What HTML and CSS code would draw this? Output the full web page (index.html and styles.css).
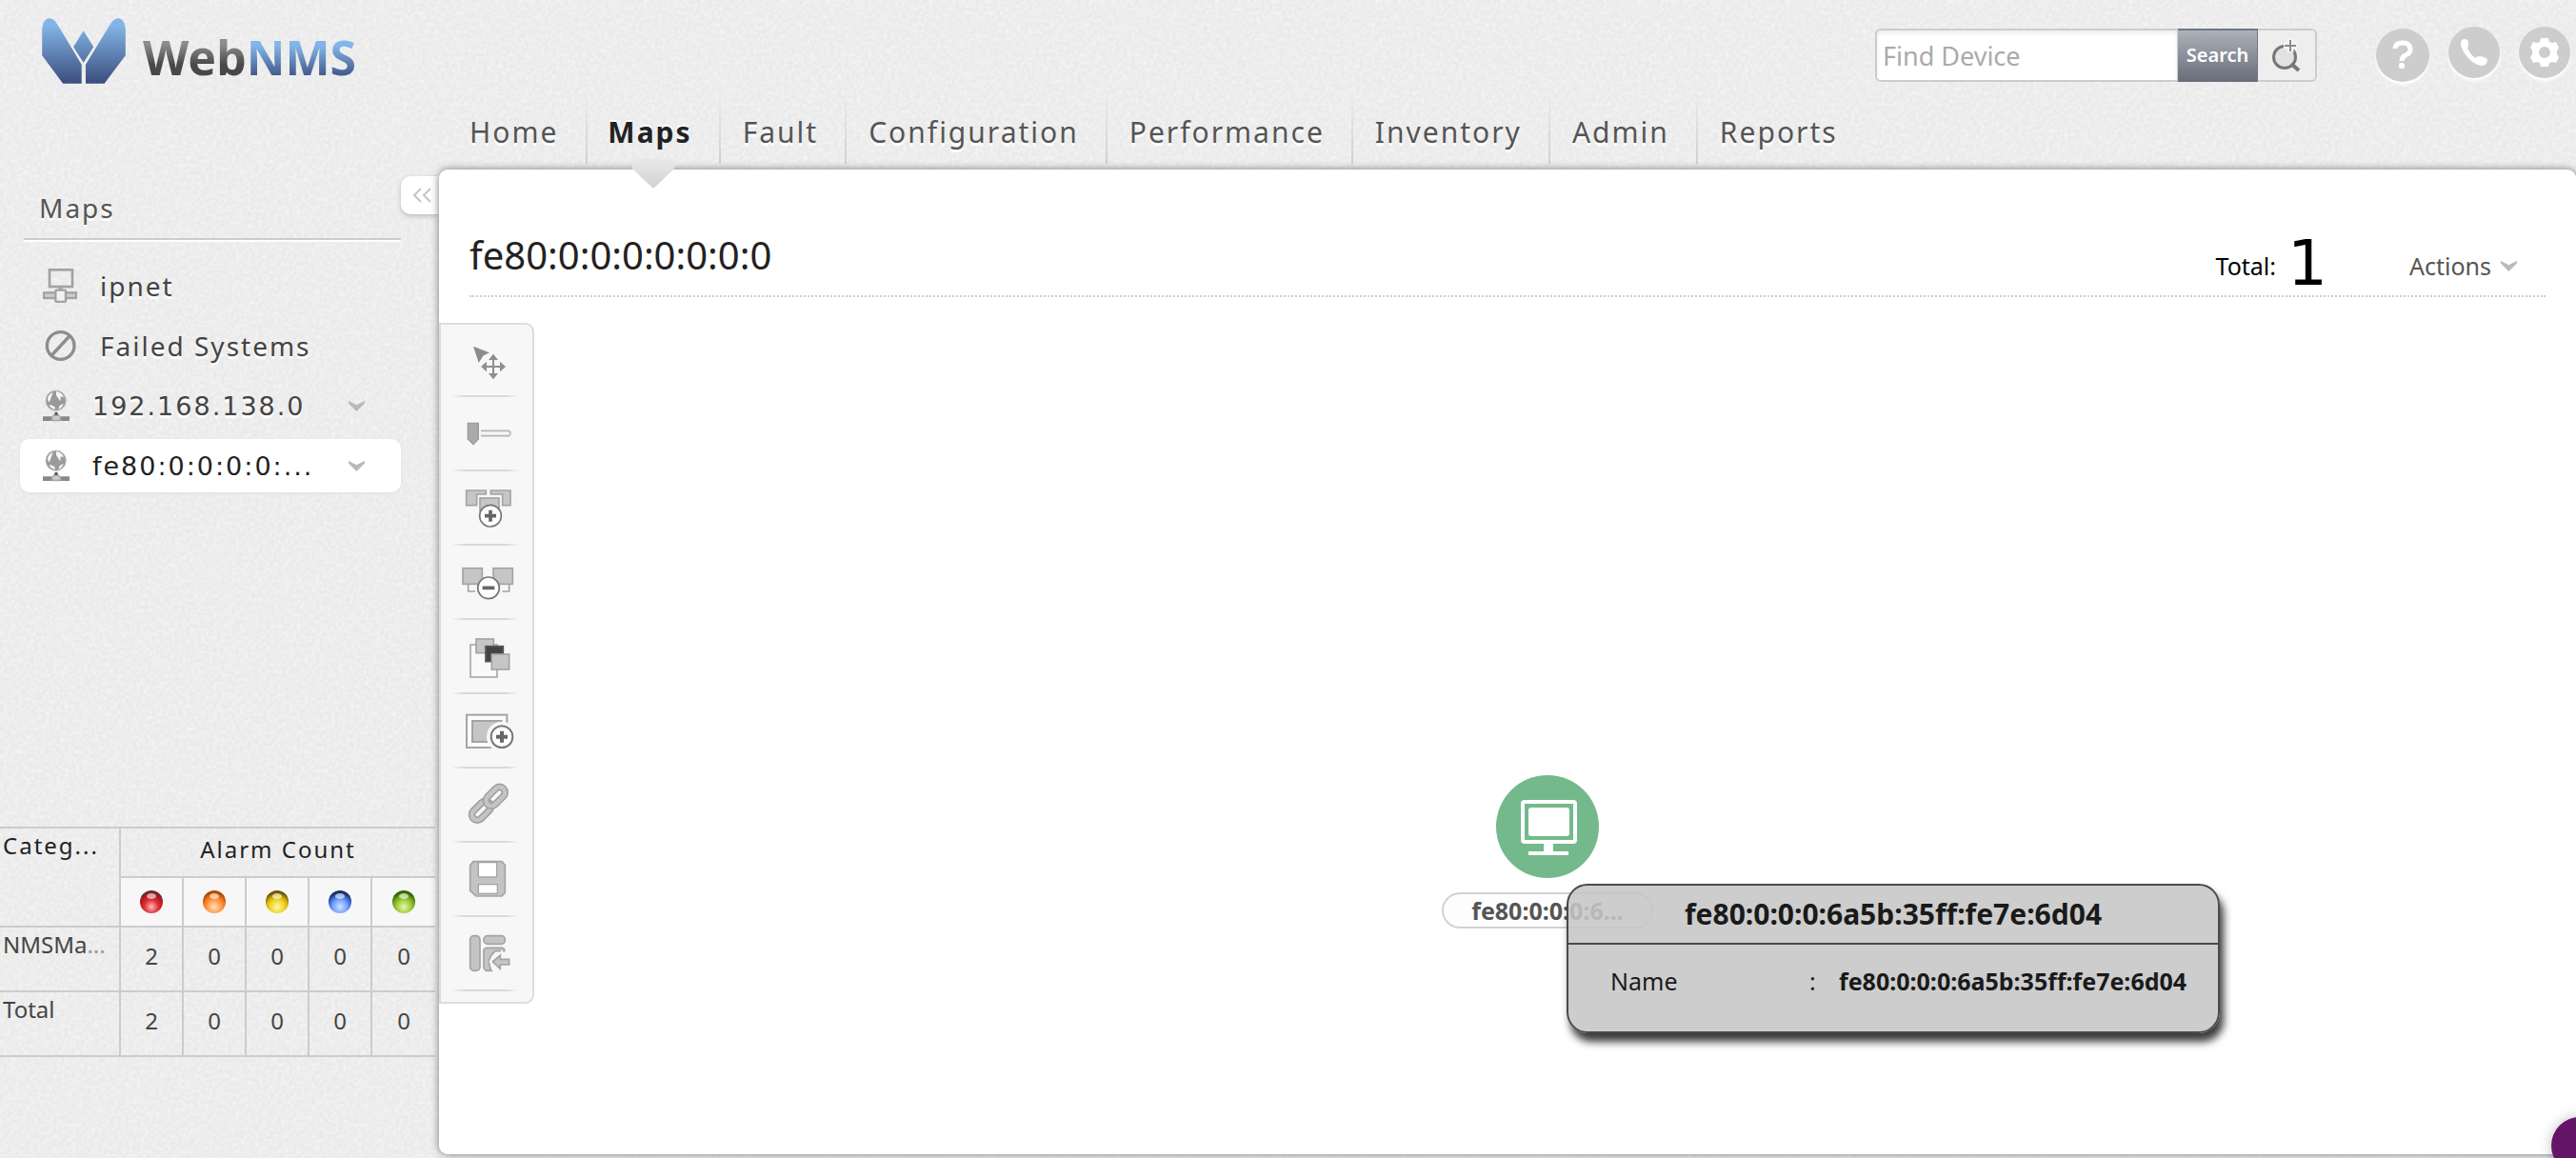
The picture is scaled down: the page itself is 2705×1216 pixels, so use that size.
FILE: index.html
```html
<!DOCTYPE html>
<html lang="en">
<head>
<meta charset="utf-8">
<title>WebNMS - Maps</title>
<link rel="stylesheet" href="styles.css">
</head>
<body>
<svg class="defs" width="0" height="0" aria-hidden="true">
  <defs>
    <linearGradient id="mark" x1="0" y1="57" x2="0" y2="265" gradientUnits="userSpaceOnUse"><stop offset="0.1" stop-color="#83b6e8"/><stop offset="1" stop-color="#3a4c7d"/></linearGradient>
    <radialGradient id="red" cx=".5" cy=".72" r=".62"><stop offset="0" stop-color="#ffb9b9"/><stop offset=".5" stop-color="#dc3038"/><stop offset=".75" stop-color="#c81820"/><stop offset="1" stop-color="#70282a"/></radialGradient>
    <radialGradient id="orange" cx=".5" cy=".72" r=".62"><stop offset="0" stop-color="#ffe0b8"/><stop offset=".5" stop-color="#ff9a50"/><stop offset=".75" stop-color="#f57416"/><stop offset="1" stop-color="#b04a08"/></radialGradient>
    <radialGradient id="yellow" cx=".5" cy=".72" r=".62"><stop offset="0" stop-color="#fff9a8"/><stop offset=".5" stop-color="#efd52c"/><stop offset=".75" stop-color="#d6ae08"/><stop offset="1" stop-color="#6e5804"/></radialGradient>
    <radialGradient id="blue" cx=".5" cy=".72" r=".62"><stop offset="0" stop-color="#cfe2ff"/><stop offset=".5" stop-color="#78a4ff"/><stop offset=".75" stop-color="#3f70e0"/><stop offset="1" stop-color="#1c3064"/></radialGradient>
    <radialGradient id="green" cx=".5" cy=".72" r=".62"><stop offset="0" stop-color="#e8f8b0"/><stop offset=".5" stop-color="#a2cc3c"/><stop offset=".75" stop-color="#70a818"/><stop offset="1" stop-color="#386404"/></radialGradient>
    <g id="globe">
      <circle cx="41" cy="35" r="32" fill="#9a9a9a" stroke="#c4c4c4" stroke-width="3"/>
      <path d="M17 22Q23 12 32 9L26 25L21 40Q12 34 17 22ZM42 6Q62 9 66 26Q60 20 55 24Q58 30 54 37L48 27L42 18ZM24 48L38 55L37 64Q25 59 20 50ZM52 52L65 44Q62 56 50 63Z" fill="#f6f6f6"/>
      <path d="M42 70L48 78L56 84V100H28V84L36 78Z" fill="#a5a5a5"/>
      <path d="M0 85H28V99H0ZM56 85H84V99H56Z" fill="#888"/>
      <circle cx="42" cy="76" r="5" fill="#555"/>
      <rect x="32" y="84" width="20" height="11" fill="#ccc"/>
    </g>
    <path id="chevron" d="M0 0L24 12L49 0V7L24 31L0 7Z" fill="#b9b9b9"/>
  </defs>
</svg>

<header class="top">
  <a class="logo" href="#" aria-label="WebNMS">
    <svg class="logo-mark" viewBox="134 57 264 208" aria-hidden="true">
      <path fill="url(#mark)" d="M134 175V90Q137 60 155 58Q170 58 181 74L259 204V264H200ZM398 175V90Q395 60 377 58Q362 58 351 74L272 204V264H331ZM265 97L297 148L265 198L233 148Z"/>
    </svg>
    <span class="logo-text"><span class="logo-web">Web</span><span class="logo-nms">NMS</span></span>
  </a>
  <div class="top-main">
    <div class="tools">
      <form class="search">
        <input class="search-input" type="text" placeholder="Find Device" aria-label="Find Device">
        <button class="search-button" type="button">Search</button>
        <button class="search-more" type="button" aria-label="Advanced search">
          <svg width="30" height="36" viewBox="0 0 30 36"><circle cx="13" cy="20" r="11.500" fill="#e2e2e2" stroke="#777" stroke-width="3"/><path d="M20 27L28 34" stroke="#777" stroke-width="4"/><path d="M19 0V15M12 8H26" stroke="#f4f4f4" stroke-width="7"/><path d="M19 2V14M13 8H25" stroke="#8a8a8a" stroke-width="2"/></svg>
        </button>
      </form>
      <div class="quick">
        <button class="round round-help" type="button" aria-label="Help"><svg width="24" height="32" viewBox="0 0 24 32"><path d="M4 9Q4 3 12 3Q20 3 20 10Q20 14 15 16Q11 18 11 22" fill="none" stroke="#fff" stroke-width="5"/><rect x="8" y="24" width="6" height="6" rx="2" fill="#fff"/></svg></button>
        <button class="round" type="button" aria-label="Support"><svg width="32" height="32" viewBox="0 0 32 32"><path d="M6 2Q10 2 10 7Q10 10 9 12Q12 18 17 22Q19 20 22 20Q28 21 30 23Q30 30 24 30Q14 29 6 17Q1 9 2 5Q3 2 6 2Z" fill="#fff"/></svg></button>
        <button class="round" type="button" aria-label="Settings"><svg width="32" height="32" viewBox="0 0 32 32"><path fill="#fff" fill-rule="evenodd" d="M12 1H20L21 5L24 6L28 5L31 11L29 14V18L31 21L28 27L24 26L21 27L20 31H12L11 27L8 26L4 27L1 21L3 18V14L1 11L4 5L8 6L11 5ZM16 10A6 6 0 1 0 16 22A6 6 0 1 0 16 10Z"/></svg></button>
      </div>
    </div>
    <nav class="nav">
      <a href="#">Home</a>
      <a href="#" class="current" aria-current="page">Maps</a>
      <a href="#">Fault</a>
      <a href="#">Configuration</a>
      <a href="#">Performance</a>
      <a href="#">Inventory</a>
      <a href="#">Admin</a>
      <a href="#">Reports</a>
    </nav>
  </div>
</header>

<div class="body">
  <aside class="side">
    <button class="collapse" type="button" aria-label="Collapse sidebar"><svg width="20" height="16" viewBox="0 0 20 16"><path d="M9 1L2 8L9 15M19 1L12 8L19 15" fill="none" stroke="#c4c4c4" stroke-width="2"/></svg></button>
    <h2 class="side-title">Maps</h2>
    <ul class="maps">
      <li><a href="#"><svg class="ico" viewBox="0 0 108 108"><rect x="21" y="4" width="72" height="53" fill="none" stroke="#a2a2a2" stroke-width="8"/><path d="M50 60H61V68H50Z" fill="#a2a2a2"/><rect x="3" y="76" width="102" height="17" fill="#ccc" stroke="#a2a2a2" stroke-width="7"/><rect x="40" y="68" width="32" height="37" rx="5" fill="#f2f2f2" stroke="#a2a2a2" stroke-width="7"/></svg><span>ipnet</span></a></li>
      <li><a href="#"><svg class="ico" viewBox="0 0 108 108"><circle cx="56" cy="54" r="43" fill="none" stroke="#8d8d8d" stroke-width="10"/><path d="M28 84L84 24" stroke="#8d8d8d" stroke-width="10"/></svg><span>Failed Systems</span></a></li>
      <li><a href="#" class="net"><svg class="ico ico-net" viewBox="0 0 84 102"><use href="#globe"/></svg><span>192.168.138.0</span><svg class="chev" viewBox="0 0 49 31"><use href="#chevron"/></svg></a></li>
      <li><a href="#" class="net selected"><svg class="ico ico-net" viewBox="0 0 84 102"><use href="#globe"/></svg><span>fe80:0:0:0:0:...</span><svg class="chev" viewBox="0 0 49 31"><use href="#chevron"/></svg></a></li>
    </ul>
    <table class="alarms">
      <colgroup><col class="c-cat"><col class="c-num"><col class="c-num"><col class="c-num"><col class="c-num"><col></colgroup>
      <thead>
        <tr class="head"><th class="cat" rowspan="2" scope="col">Categ...</th><th class="count" colspan="5" scope="colgroup">Alarm Count</th></tr>
        <tr class="levels">
          <th scope="col" aria-label="Critical"><svg class="orb" viewBox="0 0 24 24"><circle cx="12" cy="12" r="12" fill="url(#red)"/><ellipse cx="12" cy="6" rx="5" ry="3" fill="#fff" opacity=".6"/></svg></th>
          <th scope="col" aria-label="Major"><svg class="orb" viewBox="0 0 24 24"><circle cx="12" cy="12" r="12" fill="url(#orange)"/><ellipse cx="12" cy="6" rx="5" ry="3" fill="#fff" opacity=".6"/></svg></th>
          <th scope="col" aria-label="Minor"><svg class="orb" viewBox="0 0 24 24"><circle cx="12" cy="12" r="12" fill="url(#yellow)"/><ellipse cx="12" cy="6" rx="5" ry="3" fill="#fff" opacity=".6"/></svg></th>
          <th scope="col" aria-label="Warning"><svg class="orb" viewBox="0 0 24 24"><circle cx="12" cy="12" r="12" fill="url(#blue)"/><ellipse cx="12" cy="6" rx="5" ry="3" fill="#fff" opacity=".6"/></svg></th>
          <th scope="col" aria-label="Clear"><svg class="orb" viewBox="0 0 24 24"><circle cx="12" cy="12" r="12" fill="url(#green)"/><ellipse cx="12" cy="6" rx="5" ry="3" fill="#fff" opacity=".6"/></svg></th>
        </tr>
      </thead>
      <tbody>
        <tr><th scope="row">NMSMa<span class="dots">...</span></th><td>2</td><td>0</td><td>0</td><td>0</td><td>0</td></tr>
        <tr><th scope="row">Total</th><td>2</td><td>0</td><td>0</td><td>0</td><td>0</td></tr>
      </tbody>
    </table>
  </aside>

  <main class="panel">
    <div class="panel-head">
      <h1>fe80:0:0:0:0:0:0:0</h1>
      <div class="summary">
        <span class="total">Total:</span><strong class="total-num">1</strong>
        <button class="actions" type="button">Actions <svg class="chev" viewBox="0 0 49 31"><use href="#chevron"/></svg></button>
      </div>
    </div>
    <div class="canvas">
      <div class="toolbar" role="toolbar" aria-label="Map tools">
        <button type="button" aria-label="Select and move"><svg viewBox="0 0 198 234"><path d="M66 74L117 94L98 103L83 126Z" fill="#8b8b8b"/><path d="M129 106V170M97 138H161" stroke="#8f8f8f" stroke-width="6"/><path d="M129 98L144 117H114ZM129 178L144 159H114ZM90 138L108 122V154ZM168 138L150 122V154Z" fill="#8f8f8f"/></svg></button>
        <button type="button" aria-label="Zoom"><svg viewBox="0 0 198 234"><path d="M49 88H82V138L66 155L49 138Z" fill="#aaa" stroke="#9b9b9b" stroke-width="4"/><path d="M90 112H178Q188 120 178 128H90" fill="#f4f4f4" stroke="#b5b5b5" stroke-width="5"/></svg></button>
        <button type="button" aria-label="Group"><svg viewBox="0 0 198 234"><g fill="#c6c6c6" stroke="#a4a4a4" stroke-width="5"><path d="M44 66H106V78H77V113H44ZM183 66H121V78H158V113H183Z"/><rect x="87" y="90" width="60" height="40"/></g><circle cx="120" cy="146" r="34" fill="#fdfdfd" stroke="#777" stroke-width="5"/><path d="M120 128V164M102 146H138" stroke="#666" stroke-width="11"/></svg></button>
        <button type="button" aria-label="Ungroup"><svg viewBox="0 0 198 234"><g fill="#c6c6c6" stroke="#a4a4a4" stroke-width="5"><path fill="none" d="M50 127V150H72M179 127V150H157"/><rect x="33" y="77" width="61" height="50"/><rect x="129" y="77" width="61" height="50"/></g><circle cx="114" cy="139" r="34" fill="#fdfdfd" stroke="#777" stroke-width="5"/><path d="M95 139H133" stroke="#666" stroke-width="11"/></svg></button>
        <button type="button" aria-label="Arrange"><svg viewBox="0 0 198 234"><rect x="57" y="84" width="84" height="102" fill="#f9f9f9" stroke="#aaa" stroke-width="5"/><rect x="75" y="66" width="55" height="44" fill="#c6c6c6" stroke="#a4a4a4" stroke-width="5"/><rect x="105" y="89" width="55" height="48" fill="#444" stroke="#555" stroke-width="5"/><rect x="124" y="114" width="55" height="48" fill="#c6c6c6" stroke="#a4a4a4" stroke-width="5"/></svg></button>
        <button type="button" aria-label="Add container"><svg viewBox="0 0 198 234"><rect x="45" y="71" width="127" height="103" fill="#fcfcfc" stroke="#a4a4a4" stroke-width="6"/><rect x="63" y="90" width="92" height="66" fill="#c6c6c6" stroke="#a4a4a4" stroke-width="6"/><circle cx="156" cy="140" r="48" fill="#f7f7f7"/><circle cx="156" cy="140" r="34" fill="#fdfdfd" stroke="#777" stroke-width="6"/><path d="M156 122V158M138 140H174" stroke="#666" stroke-width="12"/></svg></button>
        <button type="button" aria-label="Add link"><svg viewBox="0 0 198 234"><g fill="none" transform="rotate(-45 114 116)"><rect x="47" y="99" width="70" height="34" rx="17" stroke="#a0a0a0" stroke-width="23"/><rect x="47" y="99" width="70" height="34" rx="17" stroke="#c4c4c4" stroke-width="13"/><rect x="110" y="99" width="70" height="34" rx="17" stroke="#a0a0a0" stroke-width="23"/><rect x="110" y="99" width="70" height="34" rx="17" stroke="#c4c4c4" stroke-width="13"/></g></svg></button>
        <button type="button" aria-label="Save"><svg viewBox="0 0 198 234"><path d="M66 65H156L166 77V163L156 174H75L56 157V77Z" fill="#c4c4c4" stroke="#a4a4a4" stroke-width="5"/><rect x="82" y="68" width="58" height="46" rx="3" fill="#fff" stroke="#a4a4a4" stroke-width="4"/><rect x="82" y="137" width="60" height="29" fill="#fff" stroke="#a4a4a4" stroke-width="4"/></svg></button>
        <button type="button" aria-label="Relayout"><svg viewBox="0 0 198 234"><g fill="#c4c4c4" stroke="#a4a4a4" stroke-width="5"><rect x="56" y="65" width="31" height="110" rx="12"/><rect x="99" y="65" width="67" height="26" rx="12"/><path d="M99 112Q99 103 110 103H156Q166 105 164 113L135 113Q122 125 115 142Q117 165 123 175H110Q99 174 99 163Z"/></g><path d="M127 147L151 126V139H179V156H151V169Z" fill="#c4c4c4" stroke="#f7f7f7" stroke-width="16"/><path d="M127 147L151 126V139H179V156H151V169Z" fill="#c4c4c4" stroke="#a4a4a4" stroke-width="5"/></svg></button>
      </div>

      <div class="node">
        <svg class="node-icon" viewBox="0 0 108 108"><circle cx="54" cy="54" r="54" fill="#74b98b"/><rect x="28" y="28" width="55" height="42" rx="2" fill="none" stroke="#fff" stroke-width="4"/><rect x="34" y="34" width="43" height="30" rx="3" fill="#fff"/><path d="M50 70H60V80H76V84H34V80H50Z" fill="#fff"/></svg>
        <span class="node-label">fe80:0:0:0:6...</span>
      </div>

      <div class="tip" role="tooltip">
        <h3>fe80:0:0:0:6a5b:35ff:fe7e:6d04</h3>
        <dl><dt>Name</dt><dd class="colon">:</dd><dd class="value">fe80:0:0:0:6a5b:35ff:fe7e:6d04</dd></dl>
      </div>
    </div>
  </main>
</div>
<button class="chat" type="button" aria-label="Open chat"></button>
</body>
</html>
```
FILE: styles.css
```css
* { box-sizing: border-box; }

body {
  margin: 0;
  min-height: 100vh;
  display: flex;
  flex-direction: column;
  font-family: "Noto Sans", "Open Sans", sans-serif;
  font-size: 25px;
  color: #222;
  background-color: #eaeaea;
  background-image: url("data:image/svg+xml,%3Csvg xmlns='http://www.w3.org/2000/svg' width='300' height='300'%3E%3Cfilter id='n'%3E%3CfeTurbulence type='fractalNoise' baseFrequency='.25' numOctaves='2' stitchTiles='stitch'/%3E%3CfeColorMatrix values='0 0 0 0 1 0 0 0 0 1 0 0 0 0 1 .9 0 0 0 -.3'/%3E%3C/filter%3E%3Crect width='300' height='300' filter='url(%23n)'/%3E%3C/svg%3E");
}

a { color: inherit; text-decoration: none; }
button { font: inherit; color: inherit; border: 0; padding: 0; background: none; }
svg { display: block; flex: none; }
.defs { position: absolute; }

/* Header */
.top { display: flex; height: 178px; flex: none; }
.logo { width: 461px; flex: none; display: flex; gap: 18px; padding: 19px 0 0 44px; align-items: flex-start; }
.logo-mark { width: 88px; height: 69px; }
.logo-text { font-size: 50px; line-height: 60px; font-weight: 700; padding-top: 11px; }
.logo-web, .logo-nms { background-clip: text; -webkit-background-clip: text; color: transparent; }
.logo-web { background-image: linear-gradient(#8d8d8d 30%, #484848 62%); }
.logo-nms { background-image: linear-gradient(#83b6e8 32%, #3a4c7d 85%); }
.top-main { flex: 1; display: flex; flex-direction: column; justify-content: space-between; }
.tools { display: flex; justify-content: flex-end; align-items: flex-start; padding: 28px 6px 0 0; }

.search { display: flex; margin: 2px 62px 0 0; height: 56px; }
.search-input {
  width: 318px; font: inherit; font-size: 27px; padding: 0 0 0 6px;
  border: 2px solid #ccc; border-right-width: 1px; border-radius: 6px 0 0 6px;
  background: #fff; box-shadow: inset 0 3px 4px #eee;
}
.search-input::placeholder { color: #aaa; opacity: 1; }
.search-button {
  width: 84px; font-size: 20px; font-weight: 600; color: #fff; padding-bottom: 4px;
  border: solid #6f7784; border-width: 2px 1px 0 0;
  background: linear-gradient(#adb1b8, #676d79);
}
.search-more { width: 62px; display: flex; justify-content: center; align-items: center; border: 2px solid #ccc; border-left: 0; border-radius: 0 6px 6px 0; background: #eee; }
.quick { display: flex; gap: 20px; align-items: flex-start; }
.round { width: 54px; height: 54px; border-radius: 50%; background: #cdcdcd; display: flex; align-items: center; justify-content: center; box-shadow: 0 3px 3px #fff; }
.round-help { width: 56px; height: 56px; margin-top: 2px; }

.nav { display: flex; font-size: 30px; letter-spacing: 2px; color: #555; }
.nav a {
  position: relative; height: 78px; margin-bottom: 6px; padding: 22px 28px 0 23px; line-height: 46px;
  text-shadow: 0 3px 0 #fff;
  border-right: 2px solid; border-image: linear-gradient(#eee, #cfcfcf) 1;
}
.nav a:first-child { padding-left: 32px; padding-right: 29px; }
.nav a:last-child { border: 0; }
.nav .current { font-weight: 700; color: #222; text-shadow: 0 -2px 0 #fff; padding-left: 21px; padding-right: 28px; }
.nav .current::after {
  content: ""; position: absolute; z-index: 2; left: 50%; bottom: -26px; width: 44px; height: 32px; margin-left: -22px;
  background: linear-gradient(#eaeaea, #cfd2d2); clip-path: polygon(0 0, 100% 0, 100% 35%, 50% 100%, 0 35%);
}

/* Sidebar */
.body { flex: 1; display: flex; }
.side { position: relative; width: 461px; flex: none; display: flex; flex-direction: column; padding-top: 20px; }
.collapse { position: absolute; top: 7px; right: 0; width: 40px; height: 40px; display: flex; align-items: center; padding-left: 12px; background: #fff; border-radius: 10px 0 0 10px; box-shadow: 0 2px 5px #bbb; }
.side-title { margin: 0 40px 20px 25px; padding: 0 0 12px 16px; font-size: 28px; line-height: 40px; font-weight: 400; letter-spacing: 2px; color: #555; text-shadow: 0 3px 0 #fff; border-bottom: 2px solid #ccc; box-shadow: 0 2px 0 #fff; }
.maps { list-style: none; margin: 0 40px 0 21px; padding: 0; display: flex; flex-direction: column; gap: 7px; font-size: 28px; letter-spacing: 2px; color: #444; }
.maps a { display: flex; align-items: center; height: 56px; padding: 0 38px 0 24px; gap: 24px; border-radius: 10px; text-shadow: 0 3px 0 #fff; }
.ico { width: 36px; height: 36px; }
.ico-net { width: 28px; height: 34px; }
.maps .net { font-family: "DejaVu Sans", sans-serif; font-size: 27px; }
.maps .selected { background: #fff; color: #222; box-shadow: 0 1px 3px #ddd; }
.chev { width: 17px; height: 11px; }
.maps .chev { margin-left: auto; }

.alarms { margin: auto 0 106px; width: 457px; border-collapse: collapse; table-layout: fixed; font-size: 24px; line-height: 32px; color: #444; }
.c-cat { width: 126px; }
.c-num { width: 66px; }
.alarms th, .alarms td { padding: 0; border: 2px solid #ccc; font-weight: 400; text-align: center; }
.alarms th:first-child { border-left: 0; }
.alarms tr > :last-child { border-right: 0; }
.alarms .cat, .alarms tbody th { text-align: left; vertical-align: top; padding: 2px 0 0 3px; }
.alarms .levels th { border-left: 2px solid #ccc; background: #f7f7f7; }
.alarms .head { height: 52px; letter-spacing: 2px; color: #222; }
.alarms .count { padding-bottom: 6px; }
.levels { height: 52px; }
.alarms tbody tr { height: 68px; }
.alarms td { padding-bottom: 6px; }
.dots { color: #999; }
.orb { width: 24px; height: 24px; margin: 0 auto; }

/* Map panel */
.panel { position: relative; flex: 1; min-width: 0; margin-bottom: 4px; display: flex; flex-direction: column; background: #fff; border-radius: 9px; box-shadow: 0 0 9px #777; }
.panel-head { display: flex; justify-content: space-between; height: 134px; margin: 0 32px; padding-top: 66px; border-bottom: 2px dotted #ccc; }
.panel-head h1 { margin: 0; font-size: 40px; line-height: 48px; font-weight: 400; }
.summary { display: flex; align-items: flex-end; height: 66px; color: #000; }
.total, .actions { line-height: 32px; margin-bottom: 15px; }
.total-num { font: 400 66px/66px "DejaVu Sans", sans-serif; margin-left: 12px; }
.actions { display: flex; align-items: center; gap: 10px; margin-left: 86px; margin-right: 30px; color: #555; }

.canvas { position: relative; flex: 1; padding-top: 27px; }
.toolbar { width: 100px; padding: 0 15px 11px 12px; background: #f7f7f7; border: 2px solid #ddd; border-radius: 0 9px 9px 0; display: flex; flex-direction: column; }
.toolbar button { height: 78px; border-bottom: 2px solid; border-image: linear-gradient(90deg, #f7f7f7, #d8d8d8 20%, #d8d8d8 80%, #f7f7f7) 1; }
.toolbar button:first-child { height: 76px; }
.toolbar svg { width: 66px; height: 78px; margin-top: -2px; }

.node { position: absolute; left: 1053px; top: 502px; width: 222px; display: flex; flex-direction: column; align-items: center; gap: 15px; }
.node-icon { width: 108px; height: 108px; }
.node-label { width: 100%; text-align: center; font-weight: 700; line-height: 34px; color: #555; background: #fdfdfd; border: 2px solid #d2d2d2; border-radius: 19px; }

.tip { position: absolute; left: 1184px; top: 616px; width: 686px; height: 157px; color: #1a1a1a; background: rgba(197, 197, 197, .87); border: 2px solid #4a4a4a; border-radius: 22px; box-shadow: 4px 9px 8px #3c3c3c; }
.tip h3 { margin: 0; font-size: 30px; line-height: 60px; text-align: center; border-bottom: 2px solid #4a4a4a; }
.tip dl { margin: 0; padding: 20px 22px 0 44px; display: flex; line-height: 36px; }
.tip dd { margin: 0; }
.tip dt { width: 209px; }
.tip .colon { width: 31px; }
.tip .value { font-weight: 700; }

.chat { position: fixed; right: -34px; bottom: -17px; width: 60px; height: 60px; border-radius: 50%; background: #651567; box-shadow: 0 0 14px rgba(0, 0, 0, .25); }
```
